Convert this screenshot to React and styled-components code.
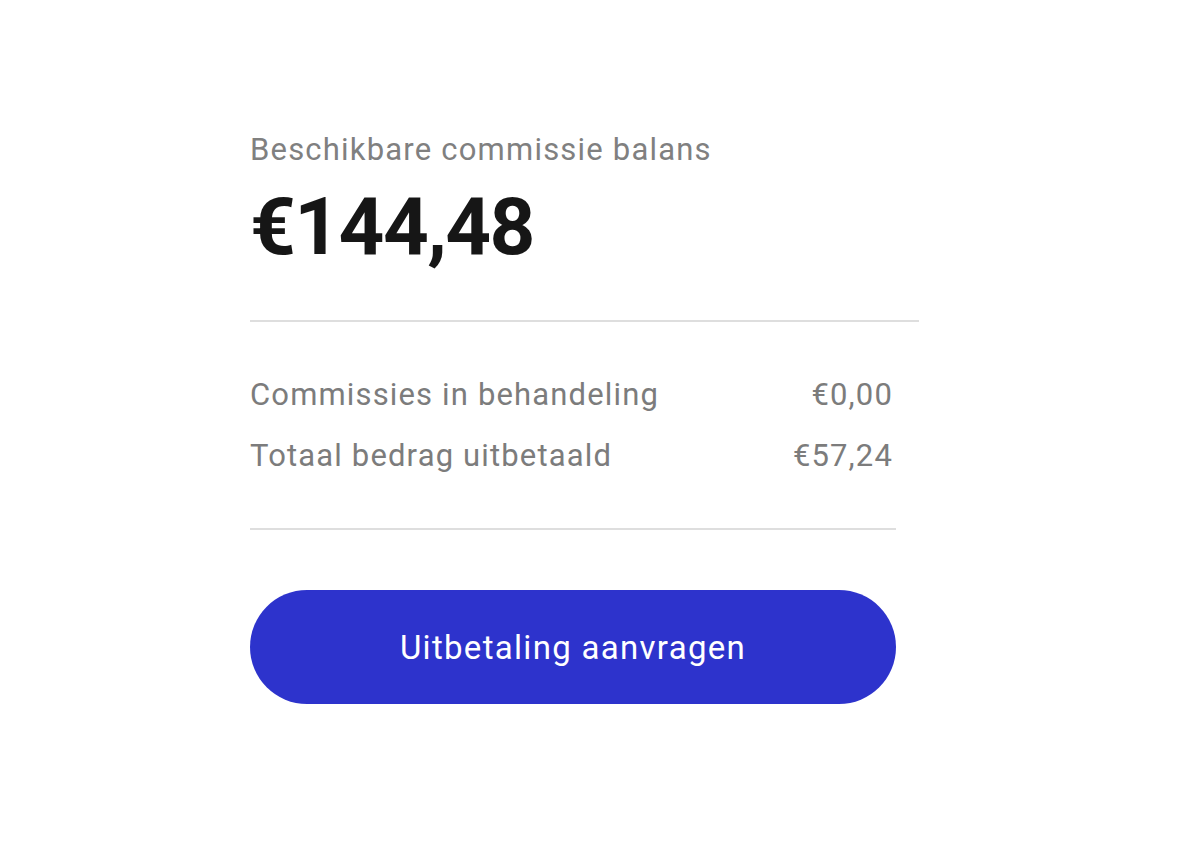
import React from 'react';
import styled, { createGlobalStyle } from 'styled-components';

const GlobalStyle = createGlobalStyle`
  html, body {
    margin: 0;
    padding: 0;
    background: #ffffff;
  }
  body {
    font-family: Roboto, "Noto Sans", Arial, sans-serif;
  }
`;

const Page = styled.div`
  min-height: 100vh;
  padding: 132px 0 0 250px;
  box-sizing: border-box;
`;

const Card = styled.div`
  width: 669px;
  display: flex;
  flex-direction: column;
`;

const BalanceLabel = styled.div`
  font-size: 31px;
  line-height: 36px;
  letter-spacing: 1.2px;
  color: #808080;
`;

const BalanceAmount = styled.div`
  margin-top: 19px;
  font-size: 80px;
  line-height: 80px;
  font-weight: 700;
  color: #161616;
  letter-spacing: -1.6px;
`;

const Divider = styled.hr`
  margin: ${props => props.$top}px 0 0 0;
  width: ${props => props.$width}px;
  height: 2px;
  border: none;
  background: #dedede;
`;

const Summary = styled.div`
  margin-top: 55px;
  width: 646px;
  padding-right: 3px;
  box-sizing: border-box;
  display: flex;
  flex-direction: column;
  gap: 25px;
`;

const SummaryRow = styled.div`
  display: flex;
  justify-content: space-between;
  font-size: 31px;
  line-height: 36px;
  letter-spacing: 1.15px;
  color: #7c7c7c;
`;

const PayoutButton = styled.button`
  margin-top: 60px;
  width: 646px;
  height: 114px;
  border: none;
  border-radius: 57px;
  background: #2d33cc;
  color: #ffffff;
  font-family: Roboto, "Noto Sans", Arial, sans-serif;
  font-size: 33px;
  letter-spacing: 1.3px;
  cursor: pointer;
`;

const App = () => {
  const rows = [
    { label: 'Commissies in behandeling', value: '€0,00' },
    { label: 'Totaal bedrag uitbetaald', value: '€57,24' },
  ];

  return (
    <>
      <GlobalStyle />
      <Page>
        <Card>
          <BalanceLabel>Beschikbare commissie balans</BalanceLabel>
          <BalanceAmount>€144,48</BalanceAmount>
          <Divider $top={53} $width={669} />
          <Summary>
            {rows.map(row => (
              <SummaryRow key={row.label}>
                <span>{row.label}</span>
                <span>{row.value}</span>
              </SummaryRow>
            ))}
          </Summary>
          <Divider $top={54} $width={646} />
          <PayoutButton>Uitbetaling aanvragen</PayoutButton>
        </Card>
      </Page>
    </>
  );
};

export default App;
